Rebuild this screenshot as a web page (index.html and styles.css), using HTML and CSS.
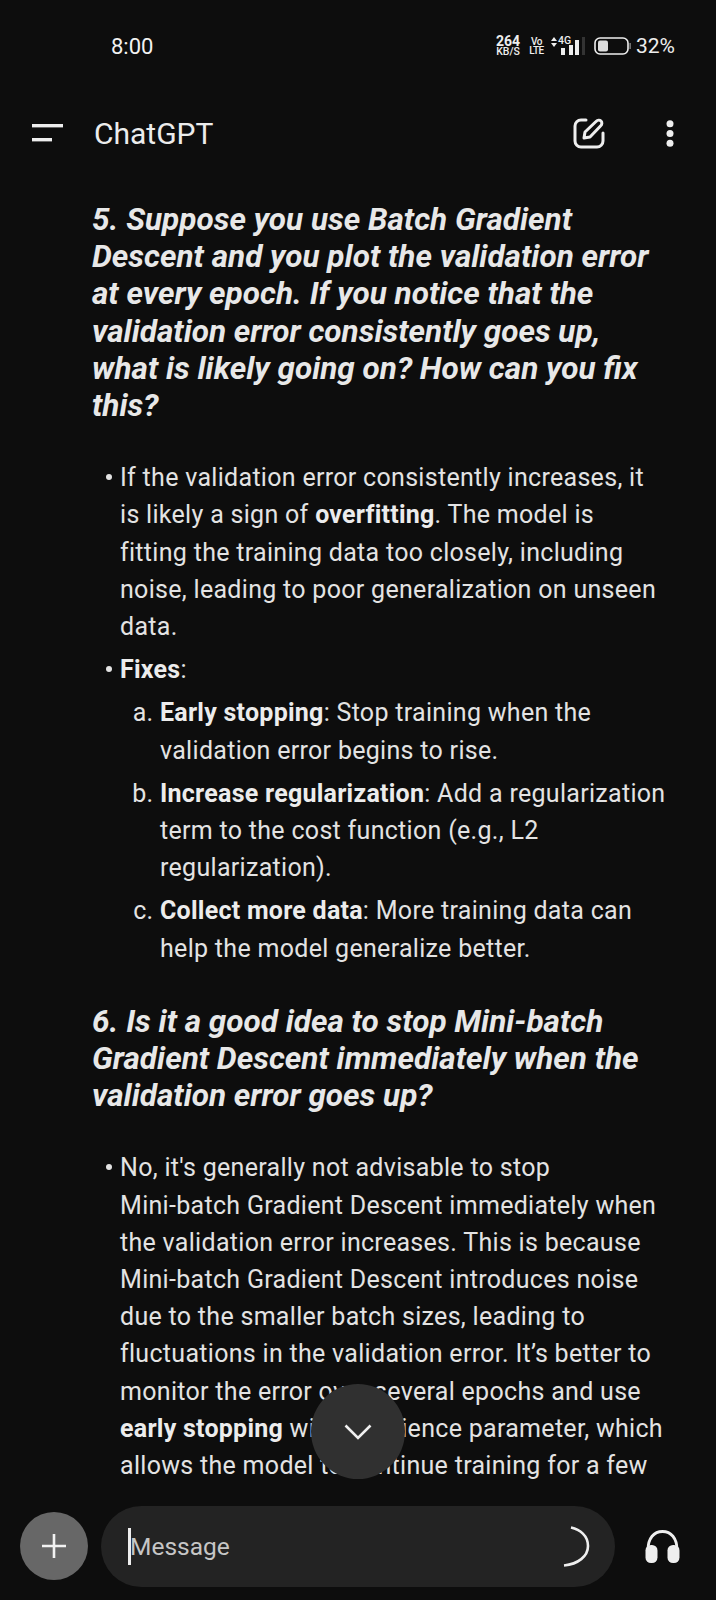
FILE: index.html
```html
<!DOCTYPE html>
<html lang="en">
<head>
  <meta charset="UTF-8">
  <meta name="viewport" content="width=device-width, initial-scale=1.0">
  <title>ChatGPT</title>
  <link rel="stylesheet" href="styles.css">
</head>
<body>
  <div class="phone">
    <div class="status">
      <span class="time">8:00</span>
      <div class="status-right">
        <span class="speed"><b>264</b><b class="unit">KB/S</b></span>
        <span class="volte"><b>Vo</b><b>LTE</b></span>
        <svg class="arrows" width="6" height="10" viewBox="0 0 6 10"><path d="M3 0l3 4H0zM3 10L0 6h6z" fill="#eee"/></svg>
        <div class="signal">
          <b class="net">4G</b>
          <svg class="bars" width="24" height="18" viewBox="0 0 24 18">
            <rect x="0" y="11" width="4" height="7" fill="#eee"/>
            <rect x="8" y="8" width="4" height="10" fill="#eee"/>
            <rect x="14" y="3" width="4" height="15" fill="#eee"/>
            <rect x="21" y="0" width="3" height="18" fill="#333"/>
          </svg>
        </div>
        <svg class="battery" width="37" height="18" viewBox="0 0 37 18">
          <rect x="1" y="1" width="33" height="16" rx="5" fill="none" stroke="#eee" stroke-width="1.600"/>
          <rect x="4" y="3.500" width="10" height="11" rx="2" fill="#ddd"/>
          <rect x="35.500" y="6" width="1.200" height="6" fill="#999"/>
        </svg>
        <span class="pct">32%</span>
      </div>
    </div>

    <header class="toolbar">
      <svg class="menu" width="31" height="18" viewBox="0 0 31 18">
        <rect x="0" y="0" width="31" height="3.400" fill="#eee"/>
        <rect x="0" y="14" width="20" height="3.400" fill="#eee"/>
      </svg>
      <h1>ChatGPT</h1>
      <svg class="compose" width="32" height="31" viewBox="0 0 32 31" fill="none" stroke="#eee" stroke-width="3" stroke-linecap="round" stroke-linejoin="round">
        <path d="M13 2H8a6 6 0 0 0-6 6v15a6 6 0 0 0 6 6h16a6 6 0 0 0 6-6v-8"/>
        <path d="M11 20l1-6L23 3.500c1.700-1.700 3.800-1.700 5-.5s1.200 3.300-.5 5L17 19z"/>
      </svg>
      <svg class="more" width="8" height="27" viewBox="0 0 8 27" fill="#eee">
        <circle cx="4" cy="3.800" r="3.500"/><circle cx="4" cy="13.500" r="3.500"/><circle cx="4" cy="23.200" r="3.500"/>
      </svg>
    </header>

    <main class="chat">
      <h2>5. Suppose you use Batch Gradient Descent and you plot the validation error at every epoch. If you notice that the validation error consistently goes up, what is likely going on? How can you fix this?</h2>
      <ul>
        <li>If the validation error consistently increases, it is likely a sign of <strong>overfitting</strong>. The model is fitting the training data too closely, including noise, leading to poor generalization on unseen data.</li>
        <li><strong>Fixes</strong>:
          <ol>
            <li><strong>Early stopping</strong>: Stop training when the validation error begins to rise.</li>
            <li><strong>Increase regularization</strong>: Add a regularization term to the cost function (e.g., L2 regularization).</li>
            <li><strong>Collect more data</strong>: More training data can help the model generalize better.</li>
          </ol>
        </li>
      </ul>
      <h2>6. Is it a good idea to stop Mini-batch Gradient Descent immediately when the validation error goes up?</h2>
      <ul>
        <li>No, it's generally not advisable to stop <span class="nowrap">Mini-batch</span> Gradient Descent immediately when the validation error increases. This is because <span class="nowrap">Mini-batch</span> Gradient Descent introduces noise due to the smaller batch sizes, leading to fluctuations in the validation error. It’s better to monitor the error over several epochs and use <strong>early stopping</strong> with a patience parameter, which allows the model to continue training for a few</li>
      </ul>
      <button class="scroll-down" aria-label="Scroll down">
        <svg width="28" height="16" viewBox="0 0 28 16" fill="none" stroke="#f0f0f0" stroke-width="2.600"><path d="M1.500 1.500L14 14 26.500 1.500"/></svg>
      </button>
    </main>

    <footer class="composer">
      <button class="plus" aria-label="Add">
        <svg width="26" height="26" viewBox="0 0 26 26" stroke="#f2f2f2" stroke-width="2.600"><path d="M13 1v24M1 13h24"/></svg>
      </button>
      <div class="input">
        <span class="caret"></span>
        <span class="placeholder">Message</span>
        <svg class="voice" width="27" height="41" viewBox="0 0 27 41" fill="none" stroke="#eee" stroke-width="2.600"><path d="M8 1.500c9 2 17 8 17 18.500S15 38 1 39.500"/></svg>
      </div>
      <svg class="headset" width="35" height="33" viewBox="0 0 35 33" fill="#eee">
        <path d="M3 20C3 8 9 1.500 17.500 1.500S32 8 32 20" fill="none" stroke="#eee" stroke-width="2.800"/>
        <rect x="0.500" y="15" width="12" height="18" rx="5.500"/>
        <rect x="22.500" y="15" width="12" height="18" rx="5.500"/>
      </svg>
    </footer>
  </div>
</body>
</html>
```

FILE: styles.css
```css
html, body {
  margin: 0;
  padding: 0;
  background-color: #0d0d0d;
}
body {
  font-family: Roboto, "Liberation Sans", sans-serif;
  color: #e3e3e3;
}
.phone {
  width: 716px;
  height: 1600px;
  display: flex;
  flex-direction: column;
  overflow: hidden;
}

/* status bar */
.status {
  height: 92px;
  flex: none;
  display: flex;
  align-items: center;
  justify-content: space-between;
  padding: 0 41px 0 111px;
  box-sizing: border-box;
}
.time {
  font-size: 22px;
  color: #f2f2f2;
}
.status-right {
  display: flex;
  align-items: center;
}
.speed, .volte {
  display: flex;
  flex-direction: column;
  align-items: center;
  color: #eee;
}
.speed {
  width: 24px;
}
.speed b {
  font-size: 14px;
  line-height: 11px;
  font-weight: 700;
}
.speed .unit {
  font-size: 10.500px;
  line-height: 10px;
  font-weight: 500;
}
.volte {
  width: 13px;
  margin-left: 10px;
  font-size: 10px;
  line-height: 9px;
  letter-spacing: -0.5px;
}
.volte b {
  font-weight: 500;
}
.arrows {
  margin: 0 0 9px 8px;
}
.signal {
  position: relative;
  width: 27px;
  height: 18px;
  margin-left: 1px;
  display: flex;
  align-items: flex-end;
  justify-content: flex-end;
}
.net {
  position: absolute;
  left: 0;
  top: -2px;
  font-size: 10.500px;
  line-height: 11px;
  font-weight: 500;
  color: #eee;
}
.battery {
  margin-left: 9px;
}
.pct {
  margin-left: 5px;
  font-size: 21px;
  color: #eee;
}

/* toolbar */
.toolbar {
  height: 86px;
  flex: none;
  display: flex;
  align-items: center;
  padding: 0 42px 4px 32px;
  box-sizing: border-box;
}
.toolbar h1 {
  margin: 0 0 0 31px;
  font-size: 30px;
  font-weight: 400;
  color: #ececec;
  flex: 1;
}
.more {
  margin-left: 61px;
}

/* messages */
.chat {
  position: relative;
  flex: 1;
  min-height: 0;
  padding: 23px 50px 0 92px;
}
h2 {
  margin: 0 0 35px;
  font-size: 31.500px;
  line-height: 37.200px;
  font-weight: 700;
  font-style: italic;
  color: #e8e8e8;
}
ul {
  margin: 0 0 36px;
  padding: 0 0 0 28px;
  list-style: none;
  font-size: 25px;
  line-height: 37.200px;
  letter-spacing: 0.3px;
}
ul > li {
  position: relative;
  margin-bottom: 6px;
}
ul > li::before {
  content: "";
  position: absolute;
  left: -14px;
  top: 15px;
  width: 6px;
  height: 6px;
  border-radius: 50%;
  background: #e3e3e3;
}
ol {
  margin: 6px 0 0;
  padding: 0 0 0 40px;
  list-style: lower-alpha;
}
ol li {
  margin-bottom: 6px;
}
strong {
  font-weight: 700;
  letter-spacing: 0.25px;
  color: #ececec;
}
.nowrap {
  white-space: nowrap;
}
.scroll-down {
  position: absolute;
  left: 311px;
  bottom: 21px;
  width: 94px;
  height: 95px;
  padding: 0;
  border: 0;
  border-radius: 50%;
  background: #303030;
  display: flex;
  align-items: center;
  justify-content: center;
}

/* composer */
.composer {
  height: 92px;
  margin-bottom: 8px;
  flex: none;
  display: flex;
  align-items: center;
  padding: 0 36px 0 20px;
  box-sizing: border-box;
}
.plus {
  width: 68px;
  height: 68px;
  padding: 0;
  border: 0;
  border-radius: 50%;
  background: #676767;
  flex: none;
  display: flex;
  align-items: center;
  justify-content: center;
}
.input {
  flex: 1;
  height: 81px;
  margin: 0 30px 0 13px;
  padding: 0 25px 0 27px;
  border-radius: 41px;
  background: #232323;
  display: flex;
  align-items: center;
}
.caret {
  width: 3px;
  height: 37px;
  background: #eee;
}
.placeholder {
  flex: 1;
  margin-left: -1px;
  font-size: 24.500px;
  color: #c6c6c6;
}
```
